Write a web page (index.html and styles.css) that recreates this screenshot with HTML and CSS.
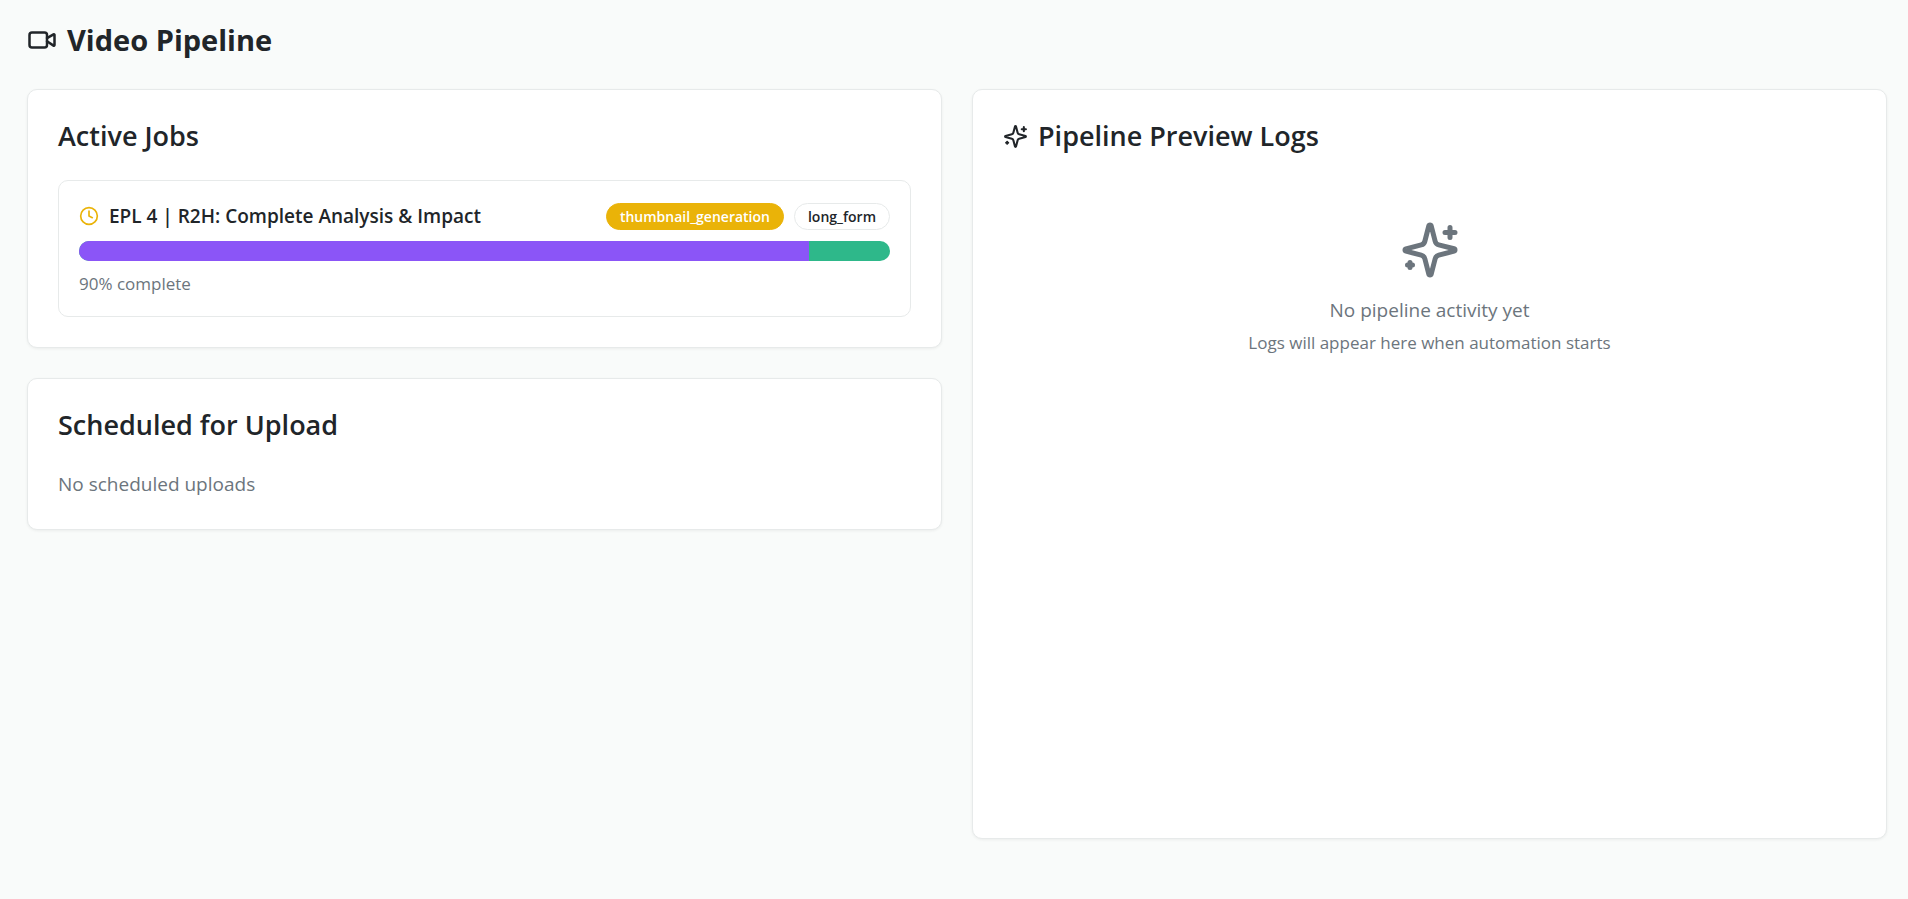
FILE: index.html
```html
<!DOCTYPE html>
<html lang="en">
<head>
<meta charset="utf-8">
<meta name="viewport" content="width=device-width, initial-scale=1">
<title>Video Pipeline</title>
<link rel="stylesheet" href="styles.css">
</head>
<body>
<svg class="sprite" aria-hidden="true">
  <symbol id="sparkles" viewBox="0 0 24 24">
    <path d="M9.937 15.5A2 2 0 0 0 8.5 14.063l-6.135-1.582a.5.5 0 0 1 0-.962L8.5 9.936A2 2 0 0 0 9.937 8.5l1.582-6.135a.5.5 0 0 1 .963 0L14.063 8.5A2 2 0 0 0 15.5 9.937l6.135 1.581a.5.5 0 0 1 0 .964L15.5 14.063a2 2 0 0 0-1.437 1.437l-1.582 6.135a.5.5 0 0 1-.963 0z"/>
    <path d="M20 3v4M22 5h-4M4 17v2M5 18H3"/>
  </symbol>
</svg>
<main class="page">
  <header class="page-header">
    <svg class="icon icon-lg" viewBox="0 0 24 24" aria-hidden="true"><path d="m16 13 5.223 3.482a.5.5 0 0 0 .777-.416V7.87a.5.5 0 0 0-.752-.432L16 10.5"/><rect x="2" y="6" width="14" height="12" rx="2"/></svg>
    <h1 class="page-title">Video Pipeline</h1>
  </header>
  <div class="columns">
    <div class="column">
      <section class="card">
        <h2 class="card-title">Active Jobs</h2>
        <article class="job">
          <div class="job-head">
            <svg class="icon icon-sm icon-pending" viewBox="0 0 24 24" aria-hidden="true"><circle cx="12" cy="12" r="10"/><path d="M12 6v6l4 2"/></svg>
            <h3 class="job-title">EPL 4 | R2H: Complete Analysis &amp; Impact</h3>
            <div class="badges">
              <span class="badge badge-status">thumbnail_generation</span>
              <span class="badge">long_form</span>
            </div>
          </div>
          <div class="progress" role="progressbar" aria-label="Job progress" aria-valuemin="0" aria-valuemax="100" aria-valuenow="90">
            <div class="progress-fill" style="width: 90%"></div>
          </div>
          <p class="note">90% complete</p>
        </article>
      </section>
      <section class="card">
        <h2 class="card-title">Scheduled for Upload</h2>
        <p class="empty-text">No scheduled uploads</p>
      </section>
    </div>
    <section class="card card-logs">
      <h2 class="card-title"><svg class="icon icon-md" aria-hidden="true"><use href="#sparkles"/></svg>Pipeline Preview Logs</h2>
      <div class="empty">
        <svg class="icon icon-xl" aria-hidden="true"><use href="#sparkles"/></svg>
        <p class="empty-text">No pipeline activity yet</p>
        <p class="note">Logs will appear here when automation starts</p>
      </div>
    </section>
  </div>
</main>
</body>
</html>
```
FILE: styles.css
```css
:root {
  --bg: #f9fbfa;
  --card: #ffffff;
  --border: #e7eaea;
  --text: #212529;
  --muted: #6c757d;
  --purple: #8b55f7;
  --green: #2eb88a;
  --yellow: #eab308;
}

* { box-sizing: border-box; }

body {
  margin: 0;
  background: var(--bg);
  color: var(--text);
  font-family: "Segoe UI", "Open Sans", "Noto Sans", sans-serif;
  font-size: 19px;
  line-height: 30px;
}

h1, h2, h3, p { margin: 0; }

.sprite { display: none; }

.page { padding: 21px 21px 60px 27px; }

.page-header {
  display: flex;
  align-items: center;
  gap: 10px;
  margin-bottom: 30px;
}

.page-title {
  font-size: 29px;
  font-weight: 700;
  line-height: 38px;
}

.icon {
  flex: none;
  fill: none;
  stroke: currentColor;
  stroke-width: 2;
  stroke-linecap: round;
  stroke-linejoin: round;
}

.icon-sm { width: 20px; height: 20px; }
.icon-md { width: 25px; height: 25px; }
.icon-lg { width: 30px; height: 30px; }
.icon-xl { width: 60px; height: 60px; }
.icon-pending { color: var(--yellow); }

.columns {
  display: grid;
  grid-template-columns: repeat(2, minmax(0, 1fr));
  align-items: start;
  gap: 30px;
}

.column {
  display: grid;
  gap: 30px;
}

.card {
  padding: 30px;
  background: var(--card);
  border: 1px solid var(--border);
  border-radius: 10px;
  box-shadow: 0 1px 3px rgba(0, 0, 0, 0.06);
}

.card-logs { min-height: 750px; }

.card-title {
  display: flex;
  align-items: center;
  gap: 10px;
  margin-bottom: 28px;
  font-size: 27px;
  font-weight: 600;
  line-height: 32px;
}

.job {
  display: grid;
  gap: 10px;
  padding: 20px;
  border: 1px solid var(--border);
  border-radius: 10px;
}

.job-head {
  display: flex;
  align-items: center;
  gap: 10px;
}

.job-title {
  flex: 1;
  font-size: 19px;
  font-weight: 600;
}

.badges {
  display: flex;
  gap: 10px;
}

.badge {
  padding: 3px 13px;
  border: 1px solid var(--border);
  border-radius: 14px;
  font-size: 14px;
  font-weight: 600;
  line-height: 19px;
}

.badge-status {
  border-color: var(--yellow);
  background: var(--yellow);
  color: #ffffff;
}

.progress {
  height: 20px;
  overflow: hidden;
  border-radius: 10px;
  background: var(--green);
}

.progress-fill {
  height: 100%;
  background: var(--purple);
}

.note {
  color: var(--muted);
  font-size: 17px;
  line-height: 25px;
}

.empty-text { color: var(--muted); }

.empty {
  display: flex;
  flex-direction: column;
  align-items: center;
  padding-top: 40px;
  color: var(--muted);
  text-align: center;
}

.empty .empty-text { margin: 15px 0 5px; }
```
